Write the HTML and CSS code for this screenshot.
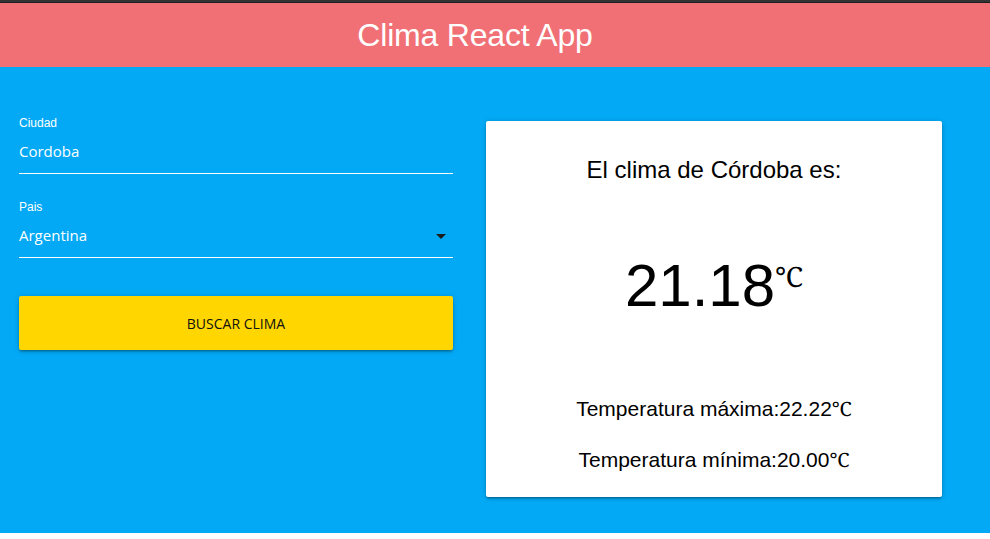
FILE: index.html
```html
<!DOCTYPE html>
<html lang="es">
<head>
<meta charset="utf-8">
<title>Clima React App</title>
<link rel="stylesheet" href="styles.css">
</head>
<body>
<div class="topbar"></div>
<header class="nav">
  <span class="brand">Clima React App</span>
</header>
<main class="main">
  <form class="form">
    <div class="field">
      <label class="label">Ciudad</label>
      <div class="value">Cordoba</div>
    </div>
    <div class="field">
      <label class="label">Pais</label>
      <div class="value select">
        <span>Argentina</span>
        <svg class="caret" width="24" height="24" viewBox="0 0 24 24"><path d="M7 10l5 5 5-5z" fill="#1c1c1c"/></svg>
      </div>
    </div>
    <button type="button" class="btn">BUSCAR CLIMA</button>
  </form>
  <section class="card">
    <p class="title">El clima de Córdoba es:</p>
    <p class="big">21.18<span class="deg-big">&#x2103;</span></p>
    <p class="line line-max">Temperatura máxima:22.22<span class="deg">&#x2103;</span></p>
    <p class="line line-min">Temperatura mínima:20.00<span class="deg">&#x2103;</span></p>
  </section>
</main>
</body>
</html>
```

FILE: styles.css
```css
* { box-sizing: border-box; }
html, body { margin: 0; padding: 0; background: #ffffff; }
body { font-family: "Liberation Sans", Arial, sans-serif; }

.topbar { height: 3px; background: #333333; border-bottom: 1px solid #1e1e1e; }

.nav {
  height: 64px;
  background: #f07075;
  color: #ffffff;
  display: flex;
  align-items: center;
  justify-content: center;
  padding-right: 40px;
}
.brand { font-size: 32px; line-height: 64px; letter-spacing: -0.2px; }

.main {
  background: #03a9f4;
  display: flex;
  align-items: flex-start;
  padding: 49px 48px 36px 19px;
  gap: 33px;
}

.form { width: 434px; display: flex; flex-direction: column; }

.field {
  display: flex;
  flex-direction: column;
  border-bottom: 1px solid #ffffff;
  padding-bottom: 12px;
  margin-bottom: 26px;
}
.field + .field { margin-bottom: 38px; }

.label {
  font-family: "Liberation Sans", Arial, sans-serif;
  font-size: 12px;
  line-height: 14px;
  color: #ffffff;
  margin-bottom: 11px;
}
.value {
  font-family: "Open Sans", sans-serif;
  font-size: 15px;
  line-height: 20px;
  height: 20px;
  color: #ffffff;
}
.select { display: flex; justify-content: space-between; align-items: center; }
.caret { display: block; margin-top: 2px; }

.btn {
  height: 54px;
  width: 100%;
  border: none;
  border-radius: 2px;
  background: #ffd600;
  color: #111111;
  font-family: "Open Sans", sans-serif;
  font-size: 14px;
  padding: 0;
  box-shadow: 0 2px 2px 0 rgba(0,0,0,0.14), 0 3px 1px -2px rgba(0,0,0,0.12), 0 1px 5px 0 rgba(0,0,0,0.2);
}

.card {
  width: 456px;
  height: 376px;
  margin-top: 5px;
  background: #ffffff;
  border-radius: 2px;
  box-shadow: 0 2px 2px 0 rgba(0,0,0,0.14), 0 3px 1px -2px rgba(0,0,0,0.12), 0 1px 5px 0 rgba(0,0,0,0.2);
  padding: 35px 0 0;
  text-align: center;
  color: #000000;
}
.card p { margin: 0; }
.title { font-size: 24px; line-height: 28px; }
.big { font-size: 60px; line-height: 70px; margin-top: 67px !important; }
.deg-big {
  font-family: "Liberation Serif", "Noto Serif", "DejaVu Serif", serif;
  font-size: 28px;
  line-height: 0;
  vertical-align: 19px;
}
.line { font-size: 21px; line-height: 24px; }
.line-max { margin-top: 76px !important; }
.line-min { margin-top: 27px !important; }
.deg {
  font-family: "Liberation Serif", "Noto Serif", "DejaVu Serif", serif;
  font-size: 20px;
  line-height: 0;
}
```
